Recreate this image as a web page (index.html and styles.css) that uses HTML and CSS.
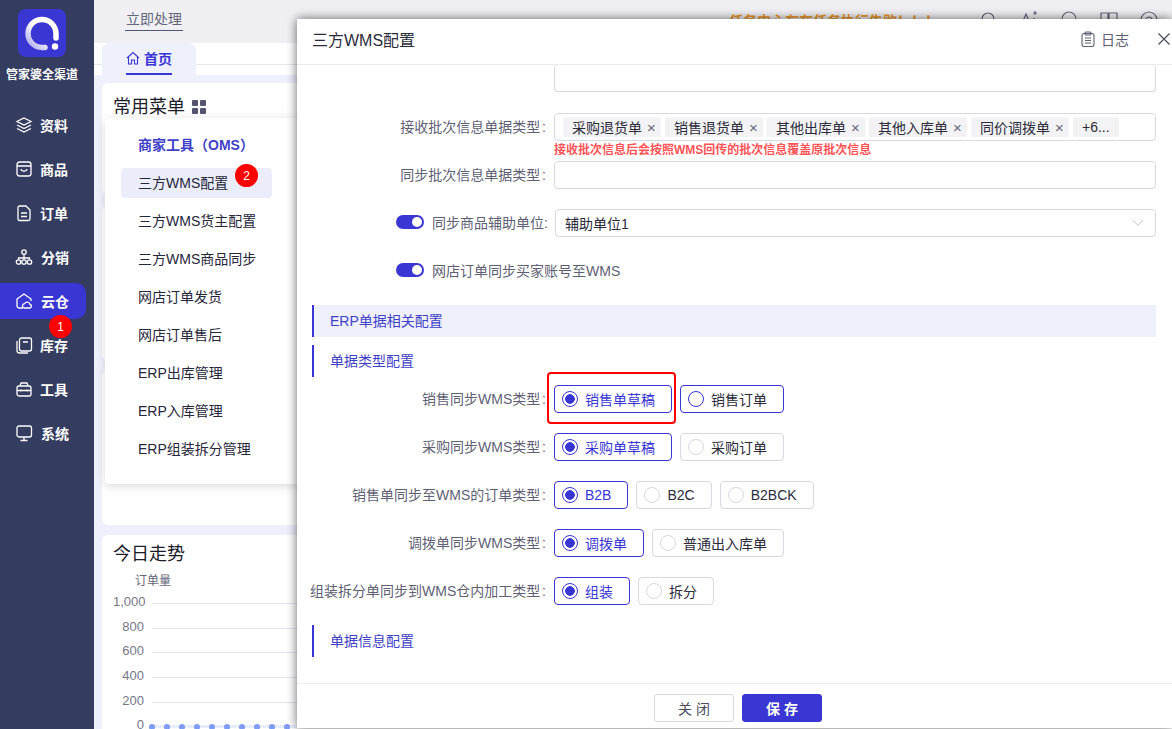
FILE: index.html
```html
<!DOCTYPE html>
<html lang="zh-CN">
<head>
  <meta charset="UTF-8" />
  <title>三方WMS配置</title>
  <link rel="stylesheet" href="styles.css">
</head>
<body>
  <div class="app">

    <!-- Left navigation -->
    <aside class="sidebar">
      <div class="logo">
        <svg width="48" height="48" viewBox="0 0 48 48">
          <defs>
            <linearGradient id="ringFade" x1="1" y1="0" x2="0" y2="1">
              <stop offset="0.500" stop-color="#fff"/>
              <stop offset="1" stop-color="#a9a7ee"/>
            </linearGradient>
          </defs>
          <rect width="48" height="48" rx="8" fill="#3a36d4"/>
          <path d="M38 29V24.500A14 14 0 1 0 24 38.500H27" fill="none" stroke="url(#ringFade)" stroke-width="5.500" stroke-linecap="round"/>
          <circle cx="37" cy="37.500" r="3.200" fill="#fff"/>
        </svg>
      </div>
      <div class="brand">管家婆全渠道</div>
      <nav class="nav">
        <a class="nav-item">
          <svg class="nav-icon" viewBox="0 0 18 18"><path d="M9 2l7 3.500-7 3.500-7-3.500zM2 9l7 3.500L16 9M2 12.500L9 16l7-3.500"/></svg>
          资料
        </a>
        <a class="nav-item">
          <svg class="nav-icon" viewBox="0 0 18 18"><rect x="2" y="2" width="14" height="14" rx="2.500"/><path d="M2 6h14M6 9c.5 3 5.500 3 6 0"/></svg>
          商品
        </a>
        <a class="nav-item">
          <svg class="nav-icon" viewBox="0 0 18 18"><path d="M4 2h7l4 4v9a1.500 1.500 0 0 1-1.500 1.500h-9A1.500 1.500 0 0 1 3 15V3.500A1.500 1.500 0 0 1 4 2zM6 9h6M6 12.500h6"/></svg>
          订单
        </a>
        <a class="nav-item wide">
          <svg class="nav-icon" viewBox="0 0 18 18"><circle cx="9" cy="4" r="2.200"/><circle cx="3.500" cy="14" r="2.200"/><circle cx="9" cy="14" r="2.200"/><circle cx="14.500" cy="14" r="2.200"/><path d="M9 6.500v5M3.500 11.500V10h11v1.500"/></svg>
          分销
        </a>
        <a class="nav-item wide active">
          <svg class="nav-icon" viewBox="0 0 18 18"><path d="M8 16H4a2 2 0 0 1-2-2V7l7-5 7 5v2"/><path d="M9 16a2.200 2.200 0 0 1 .5-4.300 3 3 0 0 1 5.600.8A1.800 1.800 0 0 1 15 16z"/></svg>
          云仓
          <span class="badge badge-nav">1</span>
        </a>
        <a class="nav-item">
          <svg class="nav-icon" viewBox="0 0 18 18"><rect x="4.500" y="2" width="12" height="13" rx="2"/><path d="M2 5v9.500A2.500 2.500 0 0 0 4.500 17H13M8 6h5"/></svg>
          库存
        </a>
        <a class="nav-item">
          <svg class="nav-icon" viewBox="0 0 18 18"><rect x="2" y="6" width="14" height="10" rx="2"/><path d="M5 6l1-3h6l1 3M2 10.500h14M6 9.500v2M12 9.500v2"/></svg>
          工具
        </a>
        <a class="nav-item wide">
          <svg class="nav-icon" viewBox="0 0 18 18"><rect x="2" y="2" width="14.500" height="11" rx="2"/><path d="M9 13v3M5.500 16.500h7"/></svg>
          系统
        </a>
      </nav>
    </aside>

    <main class="main">
      <header class="topbar">
        <span class="topbar-link">立即处理</span>
        <span class="topbar-notice">任务中心存在任务执行失败！！！</span>
        <div class="topbar-icons">
          <svg viewBox="0 0 18 18"><circle cx="8" cy="8" r="6"/><path d="M12.500 12.500L16 16"/></svg>
          <svg viewBox="0 0 18 18"><path d="M1 15L6 3l5 12M3 11h6M14 7v8M13 2h4M15 0v4"/></svg>
          <svg viewBox="0 0 18 18"><circle cx="9" cy="8" r="7"/></svg>
          <svg viewBox="0 0 18 18"><path d="M1 2h7v14H1zM9 2h8v14H9z"/></svg>
          <svg viewBox="0 0 18 18"><circle cx="9" cy="9" r="8"/><circle cx="9" cy="9" r="3"/></svg>
        </div>
      </header>

      <div class="tabbar">
        <div class="tab">
          <span class="tab-label">
            <svg width="14" height="14" viewBox="0 0 14 14"><path d="M1 7l6-5.500L13 7M2.500 6v7h3V9h3v4h3V6" fill="none" stroke="#3a36d4" stroke-width="1.100"/></svg>
            首页
          </span>
        </div>
      </div>

      <div class="content">
        <section class="card card-menu">
          <h2 class="card-title">常用菜单
            <svg width="14" height="14" viewBox="0 0 14 14" fill="#55556f"><rect width="6" height="6" rx="1"/><rect x="8" width="6" height="6" rx="1"/><rect y="8" width="6" height="6" rx="1"/><rect x="8" y="8" width="6" height="6" rx="1"/></svg>
          </h2>
        </section>
        <section class="card card-mid"></section>
        <section class="card card-mid"></section>
        <section class="card card-trend">
          <h2 class="card-title">今日走势</h2>
          <div class="chart-unit">订单量</div>
          <div class="chart">
            <div class="chart-row"><span>1,000</span><i></i></div>
            <div class="chart-row"><span>800</span><i></i></div>
            <div class="chart-row"><span>600</span><i></i></div>
            <div class="chart-row"><span>400</span><i></i></div>
            <div class="chart-row"><span>200</span><i></i></div>
            <div class="chart-row chart-base">
              <span>0</span>
              <i><b></b><b></b><b></b><b></b><b></b><b></b><b></b><b></b><b></b><b></b></i>
            </div>
          </div>
        </section>
      </div>
    </main>
  </div>

  <!-- Quick menu popup -->
  <div class="popup">
    <div class="popup-title">商家工具（OMS）</div>
    <div class="popup-item current">三方WMS配置<span class="badge badge-menu">2</span></div>
    <div class="popup-item">三方WMS货主配置</div>
    <div class="popup-item">三方WMS商品同步</div>
    <div class="popup-item">网店订单发货</div>
    <div class="popup-item">网店订单售后</div>
    <div class="popup-item">ERP出库管理</div>
    <div class="popup-item">ERP入库管理</div>
    <div class="popup-item">ERP组装拆分管理</div>
  </div>

  <!-- WMS settings drawer -->
  <div class="drawer">
    <div class="drawer-head">
      <span class="drawer-title">三方WMS配置</span>
      <span class="drawer-log">
        <svg width="14" height="16" viewBox="0 0 14 16" fill="none" stroke="#5f5f75" stroke-width="1.100"><rect x="1" y="2.500" width="12" height="13" rx="2"/><rect x="4" y="1" width="6" height="3" rx="1"/><path d="M4 7h6M4 9.500h6M4 12h6"/></svg>
        日志
      </span>
      <svg class="drawer-close" width="12" height="12" viewBox="0 0 12 12"><path d="M.5.500l11 11M11.500.500l-11 11" stroke="#4c4c60" stroke-width="1.200"/></svg>
    </div>

    <div class="drawer-body">
      <div class="field field-cut">
        <div class="input input-cut"></div>
      </div>

      <div class="field field-hinted">
        <label class="field-label">接收批次信息单据类型 :</label>
        <div class="field-control">
          <div class="input tags">
            <span class="tag">采购退货单<em>×</em></span>
            <span class="tag">销售退货单<em>×</em></span>
            <span class="tag">其他出库单<em>×</em></span>
            <span class="tag">其他入库单<em>×</em></span>
            <span class="tag">同价调拨单<em>×</em></span>
            <span class="tag tag-more">+6...</span>
          </div>
          <div class="hint">接收批次信息后会按照WMS回传的批次信息覆盖原批次信息</div>
        </div>
      </div>

      <div class="field">
        <label class="field-label">同步批次信息单据类型 :</label>
        <div class="field-control"><div class="input"></div></div>
      </div>

      <div class="field">
        <label class="field-label field-label-tight">
          <span class="switch"></span>同步商品辅助单位:
        </label>
        <div class="field-control">
          <div class="input select">
            <span>辅助单位1</span>
            <svg width="12" height="8" viewBox="0 0 12 8"><path d="M1 1l5 5.500L11 1" fill="none" stroke="#c4c4ce" stroke-width="1"/></svg>
          </div>
        </div>
      </div>

      <div class="field">
        <label class="field-label field-label-switch">
          <span class="switch"></span>网店订单同步买家账号至WMS
        </label>
      </div>

      <div class="section-bar">ERP单据相关配置</div>
      <div class="section-sub">单据类型配置</div>

      <div class="field field-radio">
        <label class="field-label">销售同步WMS类型 :</label>
        <div class="radios">
          <span class="radio checked marked">销售单草稿</span>
          <span class="radio outlined">销售订单</span>
        </div>
      </div>
      <div class="field field-radio">
        <label class="field-label">采购同步WMS类型 :</label>
        <div class="radios">
          <span class="radio checked">采购单草稿</span>
          <span class="radio">采购订单</span>
        </div>
      </div>
      <div class="field field-radio">
        <label class="field-label">销售单同步至WMS的订单类型 :</label>
        <div class="radios">
          <span class="radio checked">B2B</span>
          <span class="radio">B2C</span>
          <span class="radio">B2BCK</span>
        </div>
      </div>
      <div class="field field-radio">
        <label class="field-label">调拨单同步WMS类型 :</label>
        <div class="radios">
          <span class="radio checked">调拨单</span>
          <span class="radio">普通出入库单</span>
        </div>
      </div>
      <div class="field field-radio">
        <label class="field-label">组装拆分单同步到WMS仓内加工类型 :</label>
        <div class="radios">
          <span class="radio checked">组装</span>
          <span class="radio">拆分</span>
        </div>
      </div>

      <div class="section-sub section-last">单据信息配置</div>
    </div>

    <div class="drawer-foot">
      <button class="btn">关 闭</button>
      <button class="btn btn-primary">保 存</button>
    </div>
  </div>
</body>
</html>
```

FILE: styles.css
```css
* {
  box-sizing: border-box;
}

body {
  margin: 0;
  height: 729px;
  overflow: hidden;
  position: relative;
  font-family: "Liberation Sans", "Noto Sans CJK SC", sans-serif;
  font-size: 14px;
  color: #2b2b3a;
}

.app {
  display: flex;
  height: 729px;
}

/* Sidebar */
.sidebar {
  width: 94px;
  flex: none;
  background: #343c60;
  color: #fff;
  padding-top: 9px;
}

.logo {
  display: flex;
  justify-content: center;
  padding-right: 10px;
}

.brand {
  margin-top: 9px;
  padding-right: 10px;
  text-align: center;
  font-size: 12px;
  font-weight: bold;
  line-height: 18px;
}

.nav {
  margin-top: 23px;
}

.nav-item {
  display: flex;
  align-items: center;
  gap: 7px;
  position: relative;
  width: 86px;
  height: 36px;
  margin-bottom: 8px;
  padding-left: 15px;
  font-size: 14px;
  font-weight: bold;
  border-radius: 0 10px 10px 0;
}

.nav-item.wide {
  gap: 8px;
}

.nav-item.active {
  background: #3a36d4;
}

.nav-icon {
  width: 18px;
  height: 18px;
  fill: none;
  stroke: #fff;
  stroke-width: 1.300;
}

.badge {
  position: absolute;
  display: flex;
  align-items: center;
  justify-content: center;
  border-radius: 50%;
  background: #fe0000;
  color: #fff;
  font-size: 12px;
  font-weight: normal;
}

.badge-nav {
  width: 23px;
  height: 23px;
  left: 49px;
  top: 32px;
}

.badge-menu {
  width: 23px;
  height: 23px;
  left: 114px;
  top: -4px;
}

/* Main area behind the drawer */
.main {
  flex: 1;
  min-width: 0;
  background: #eef0fc;
}

.topbar {
  height: 43px;
  background: #f0f0f4;
  display: flex;
  align-items: center;
  padding: 0 14px 4px 31px;
}

.topbar-link {
  color: #66667a;
  font-size: 14px;
  padding: 0 1px 2px;
  border-bottom: 1px solid #55556f;
}

.topbar-notice {
  margin-left: auto;
  color: #ee9a2c;
  font-size: 14px;
  font-weight: bold;
}

.topbar-icons {
  display: flex;
  gap: 22px;
  margin-left: 41px;
}

.topbar-icons svg {
  width: 18px;
  height: 18px;
  fill: none;
  stroke: #66667a;
  stroke-width: 1.200;
}

.tabbar {
  height: 32px;
  background: linear-gradient(#fff 21px, #e6e6ee 21px, #e6e6ee 22px, #fff 22px);
  padding-left: 8px;
}

.tab {
  width: 94px;
  height: 32px;
  background: #eef0fc;
  border-radius: 8px 8px 0 0;
  display: flex;
  justify-content: center;
}

.tab-label {
  display: flex;
  align-items: center;
  gap: 4px;
  height: 32px;
  color: #3a36d4;
  font-weight: bold;
  font-size: 14px;
  border-bottom: 2px solid #3a36d4;
}

.content {
  padding: 8px 0 0 8px;
}

.card {
  background: #fff;
  border-radius: 6px;
  margin-bottom: 10px;
  padding: 0 11px;
}

.card-menu {
  height: 112px;
}

.card-mid {
  height: 155px;
}

.card-title {
  margin: 0;
  padding-top: 12px;
  display: flex;
  align-items: center;
  gap: 7px;
  font-size: 18px;
  font-weight: normal;
  line-height: 24px;
  color: #1c1c2a;
}

.card-trend .card-title {
  padding-top: 7px;
}

.chart-unit {
  margin-top: 6px;
  padding-left: 22px;
  color: #66667a;
  font-size: 12px;
  line-height: 18px;
}

.chart {
  margin-top: 1px;
}

.chart-row {
  display: flex;
  align-items: center;
  height: 24.700px;
  color: #77778a;
  font-size: 13px;
}

.chart-row span {
  width: 31px;
  margin: -4px 8px 0 0;
  text-align: right;
  flex: none;
}

.chart-row i {
  flex: 1;
  height: 1px;
  background: #e2e5ee;
}

.chart-base i {
  height: 3px;
  background: #e8edfd;
  display: flex;
  align-items: center;
  gap: 9px;
}

.chart-base b {
  width: 6px;
  height: 6px;
  flex: none;
  border-radius: 50%;
  background: #7f9cf5;
}

.chart-base b:first-child {
  margin-left: -3px;
}

/* Popup menu */
.popup {
  position: absolute;
  left: 105px;
  top: 118px;
  width: 200px;
  height: 366px;
  background: #fff;
  border-radius: 4px;
  box-shadow: 0 2px 10px rgba(0,0,0,0.15);
  padding: 17px 0 0 16px;
}

.popup-title {
  margin: 0 0 13px 17px;
  color: #3f3fc8;
  font-weight: bold;
  font-size: 14px;
  line-height: 20px;
}

.popup-item {
  position: relative;
  width: 151px;
  height: 30px;
  margin-bottom: 8px;
  padding-left: 17px;
  line-height: 30px;
  border-radius: 4px;
  color: #26263a;
}

.popup-item.current {
  background: #ecedfb;
}

/* Drawer */
.drawer {
  position: absolute;
  left: 297px;
  right: 0;
  top: 19px;
  height: 709px;
  background: #fff;
  box-shadow: 0 0 10px rgba(0,0,0,0.6);
  display: flex;
  flex-direction: column;
}

.drawer-head {
  height: 46px;
  flex: none;
  display: flex;
  align-items: center;
  padding: 0 2px 5px 15px;
  border-bottom: 1px solid #ebebf0;
}

.drawer-title {
  font-size: 16px;
  color: #2b2b3a;
}

.drawer-log {
  margin-left: auto;
  display: flex;
  align-items: center;
  gap: 6px;
  color: #5f5f75;
  font-size: 14px;
}

.drawer-close {
  margin-left: 29px;
}

.drawer-body {
  flex: 1;
  overflow: hidden;
  padding: 0 16px 0 15px;
}

.field {
  display: flex;
  align-items: center;
  margin-bottom: 20px;
}

.field-cut {
  margin-bottom: 21px;
}

.field-hinted {
  align-items: flex-start;
  margin-bottom: 0;
}

.field-hinted .field-label {
  height: 28px;
}

.field-label {
  width: 242px;
  flex: none;
  display: flex;
  align-items: center;
  justify-content: flex-end;
  padding: 0 8px 2px 0;
  color: #5f5f75;
  font-size: 14px;
  word-spacing: -2px;
  white-space: nowrap;
}

.field-label-tight {
  padding-right: 6px;
}

.field-label-switch {
  justify-content: flex-start;
  padding-left: 84px;
  width: auto;
  height: 28px;
}

.field-control {
  flex: 1;
  min-width: 0;
}

.field-cut .input-cut {
  margin-left: 242px;
  width: 100%;
  border-top: 0;
  height: 27px;
}

.input {
  height: 28px;
  border: 1px solid #d8d8e2;
  border-radius: 4px;
  background: #fff;
}

.tags {
  display: flex;
  align-items: center;
  gap: 4px;
  padding-left: 8px;
}

.tag {
  height: 20px;
  padding: 0 4px 0 9px;
  display: flex;
  align-items: center;
  gap: 4px;
  background: #f3f3f5;
  border-radius: 2px;
  color: #2b2b3a;
  font-size: 14px;
  white-space: nowrap;
}

.tag em {
  font-style: normal;
  color: #66667a;
  font-size: 15px;
  width: 11px;
  text-align: center;
}

.tag-more {
  padding: 0 9px;
}

.hint {
  height: 20px;
  color: #ff5557;
  font-size: 12px;
  font-weight: bold;
  line-height: 18px;
}

.select {
  display: flex;
  align-items: center;
  justify-content: space-between;
  padding: 0 11px 0 9px;
  margin-left: 1px;
}

.switch {
  position: relative;
  width: 28px;
  height: 14px;
  margin-right: 8px;
  border-radius: 7px;
  background: #3a36d4;
  flex: none;
}

.switch::after {
  content: "";
  position: absolute;
  right: 2px;
  top: 2px;
  width: 10px;
  height: 10px;
  border-radius: 50%;
  background: #fff;
}

.section-bar {
  height: 32px;
  margin: 0 0 8px;
  padding-left: 16px;
  line-height: 32px;
  background: #eef0fc;
  border-left: 2px solid #3a36d4;
  color: #3f3fc8;
}

.section-sub {
  height: 32px;
  margin-bottom: 8px;
  padding-left: 16px;
  line-height: 32px;
  border-left: 2px solid #3a36d4;
  color: #3f3fc8;
}

.section-last {
  margin-top: 20px;
}

.radios {
  display: flex;
  gap: 8px;
}

.radio {
  position: relative;
  height: 28px;
  display: flex;
  align-items: center;
  gap: 7px;
  padding: 0 16px 0 7px;
  border: 1px solid #d8d8e2;
  border-radius: 4px;
  color: #2b2b3a;
  white-space: nowrap;
}

.radio::before {
  content: "";
  width: 14px;
  height: 14px;
  border: 1px solid #d8d8e2;
  border-radius: 50%;
  background: #fff;
  flex: none;
}

.radio.checked {
  border-color: #3a36d4;
  color: #3a36d4;
}

.radio.checked::before {
  border-color: #3a36d4;
  background: radial-gradient(circle, #3a36d4 0 4.500px, #fff 5px);
}

.radio.outlined {
  border-color: #3a36d4;
}

.radio.outlined::before {
  border-color: #3a36d4;
}

/* red box drawn on top of the screenshot */
.radio.marked::after {
  content: "";
  position: absolute;
  left: -8px;
  top: -14px;
  right: -5px;
  bottom: -12px;
  border: 2px solid #f00;
  border-radius: 4px;
}

.drawer-foot {
  height: 45px;
  flex: none;
  display: flex;
  justify-content: flex-end;
  align-items: center;
  gap: 8px;
  padding: 4px 350px 0 0;
  border-top: 1px solid #ebebf0;
}

.btn {
  width: 80px;
  height: 28px;
  border: 1px solid #d8d8e2;
  border-radius: 3px;
  background: #fff;
  color: #4c4c60;
  font-family: inherit;
  font-size: 14px;
}

.btn-primary {
  border-color: #3a36d4;
  background: #3a36d4;
  color: #fff;
  font-weight: bold;
}
```
